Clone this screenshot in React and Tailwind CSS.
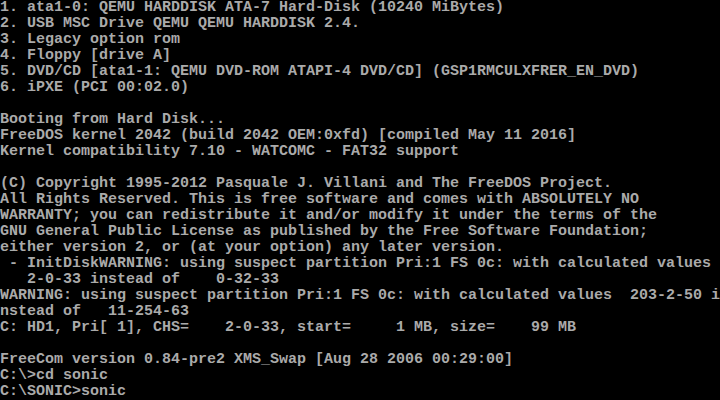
import React from 'react';

// 80x25 VGA text screen, one string per row
const lines = [
  '1. ata1-0: QEMU HARDDISK ATA-7 Hard-Disk (10240 MiBytes)',
  '2. USB MSC Drive QEMU QEMU HARDDISK 2.4.',
  '3. Legacy option rom',
  '4. Floppy [drive A]',
  '5. DVD/CD [ata1-1: QEMU DVD-ROM ATAPI-4 DVD/CD] (GSP1RMCULXFRER_EN_DVD)',
  '6. iPXE (PCI 00:02.0)',
  '',
  'Booting from Hard Disk...',
  'FreeDOS kernel 2042 (build 2042 OEM:0xfd) [compiled May 11 2016]',
  'Kernel compatibility 7.10 - WATCOMC - FAT32 support',
  '',
  '(C) Copyright 1995-2012 Pasquale J. Villani and The FreeDOS Project.',
  'All Rights Reserved. This is free software and comes with ABSOLUTELY NO',
  'WARRANTY; you can redistribute it and/or modify it under the terms of the',
  'GNU General Public License as published by the Free Software Foundation;',
  'either version 2, or (at your option) any later version.',
  ' - InitDiskWARNING: using suspect partition Pri:1 FS 0c: with calculated values',
  '   2-0-33 instead of    0-32-33',
  'WARNING: using suspect partition Pri:1 FS 0c: with calculated values  203-2-50 i',
  'nstead of   11-254-63',
  'C: HD1, Pri[ 1], CHS=    2-0-33, start=     1 MB, size=    99 MB',
  '',
  'FreeCom version 0.84-pre2 XMS_Swap [Aug 28 2006 00:29:00]',
  'C:\\>cd sonic',
  'C:\\SONIC>sonic',
];

const App = () => {
  return (
    <div className="w-[720px] h-[400px] bg-black overflow-hidden">
      <div className="flex flex-col font-['Liberation_Mono',monospace] font-bold text-[15px] leading-[16px] text-[#aaaaaa]">
        {lines.map((line, i) => (
          <div key={i} className="h-[16px] whitespace-pre">
            {line}
          </div>
        ))}
      </div>
    </div>
  );
};

export default App;
